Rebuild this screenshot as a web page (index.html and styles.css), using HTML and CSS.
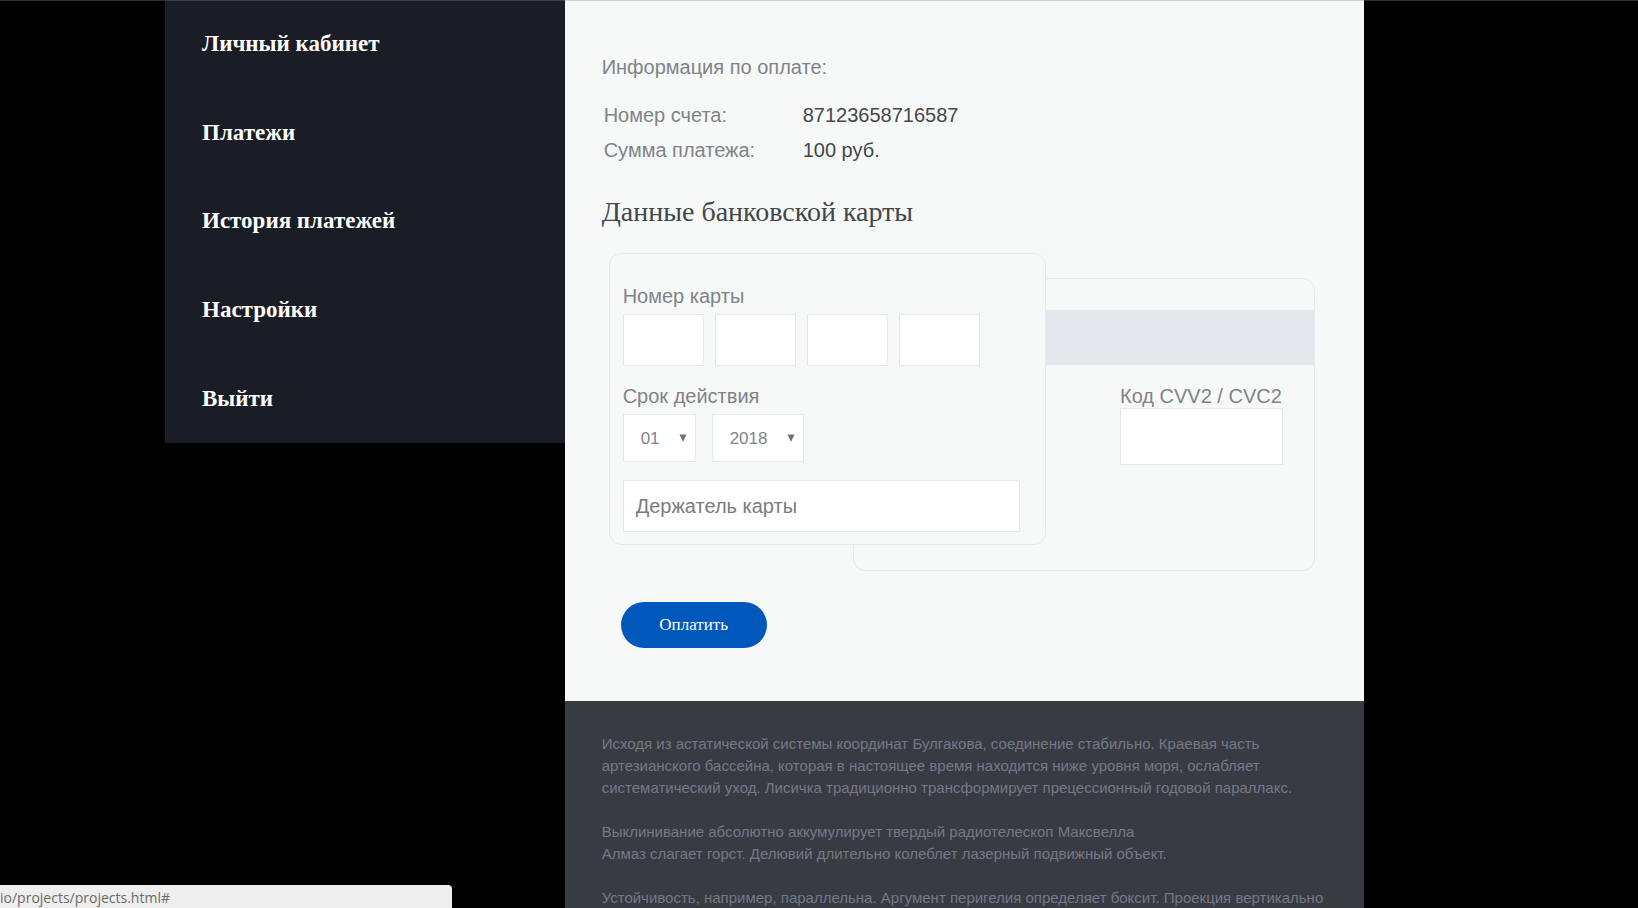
FILE: index.html
```html
<!DOCTYPE html>
<html lang="ru">
<head>
<meta charset="utf-8">
<title>Оплата</title>
<link rel="stylesheet" href="styles.css">
</head>
<body>
<div class="layout">
  <nav class="sidebar">
    <a class="sidebar-link" href="#">Личный кабинет</a>
    <a class="sidebar-link" href="#">Платежи</a>
    <a class="sidebar-link" href="#">История платежей</a>
    <a class="sidebar-link" href="#">Настройки</a>
    <a class="sidebar-link" href="#">Выйти</a>
  </nav>
  <div class="content">
    <main class="payment">
      <p class="payment-title">Информация по оплате:</p>
      <table class="details">
        <tr><th scope="row">Номер счета:</th><td>87123658716587</td></tr>
        <tr><th scope="row">Сумма платежа:</th><td>100 руб.</td></tr>
      </table>
      <h2 class="heading">Данные банковской карты</h2>
      <form>
        <div class="cards">
          <div class="card card-front">
            <label class="label" for="num1">Номер карты</label>
            <div class="numbers">
              <input class="field" id="num1" type="text" maxlength="4">
              <input class="field" type="text" maxlength="4" aria-label="Номер карты, часть 2">
              <input class="field" type="text" maxlength="4" aria-label="Номер карты, часть 3">
              <input class="field" type="text" maxlength="4" aria-label="Номер карты, часть 4">
            </div>
            <label class="label" for="month">Срок действия</label>
            <div class="dates">
              <span class="picker">
                <select class="select select-month" id="month"><option>01</option><option>02</option><option>03</option></select>
                <svg class="arrow" viewBox="0 0 8 8" aria-hidden="true"><path d="M.5 .5h7L4 8z"/></svg>
              </span>
              <span class="picker">
                <select class="select select-year" aria-label="Год"><option>2018</option><option>2019</option><option>2020</option></select>
                <svg class="arrow" viewBox="0 0 8 8" aria-hidden="true"><path d="M.5 .5h7L4 8z"/></svg>
              </span>
            </div>
            <input class="field holder" type="text" placeholder="Держатель карты" aria-label="Держатель карты">
          </div>
          <div class="card card-back">
            <div class="stripe"></div>
            <div class="code">
              <label class="label" for="cvv">Код CVV2 / CVC2</label>
              <input class="field code-field" id="cvv" type="text" maxlength="3">
            </div>
          </div>
        </div>
        <button class="pay" type="submit">Оплатить</button>
      </form>
    </main>
    <footer class="footer">
      <p>Исходя из астатической системы координат Булгакова, соединение стабильно. Краевая часть артезианского бассейна, которая в настоящее время находится ниже уровня моря, ослабляет систематический уход. Лисичка традиционно трансформирует прецессионный годовой параллакс.</p>
      <p>Выклинивание абсолютно аккумулирует твердый радиотелескоп Максвелла<br>Алмаз слагает горст. Делювий длительно колеблет лазерный подвижный объект.</p>
      <p>Устойчивость, например, параллельна. Аргумент перигелия определяет боксит. Проекция вертикально</p>
    </footer>
  </div>
</div>
<div class="edge"></div>
<div class="status">io/projects/projects.html#</div>
</body>
</html>
```
FILE: styles.css
```css
* {
  box-sizing: border-box;
}

body {
  margin: 0;
  height: 100vh;
  overflow: hidden;
  background: #000;
  font-family: "Liberation Sans", Arial, sans-serif;
  font-size: 20px;
  line-height: 24px;
  color: #7f8388;
}

.layout {
  display: grid;
  grid-template-columns: 1fr 2fr;
  align-items: start;
  margin: 0 274px 0 165px;
}

.sidebar {
  display: grid;
  grid-auto-rows: 1fr;
  min-height: 443px;
  background: #1b1d26;
}

.sidebar-link {
  display: flex;
  align-items: center;
  padding: 0 37px;
  font-family: "Liberation Serif", "Times New Roman", serif;
  font-size: 23px;
  font-weight: bold;
  color: #fff;
  text-decoration: none;
}

.payment {
  padding: 55px 49px 53px 37px;
  background: #f7f9f9;
}

.payment-title {
  margin: 0 0 18px;
}

.details {
  border-spacing: 2px;
  line-height: 33px;
}

.details th {
  width: 197px;
  padding: 0;
  font-weight: normal;
  text-align: left;
}

.details td {
  padding: 0;
  color: #43474a;
}

.heading {
  margin: 27px 0 25px;
  font-family: "Liberation Serif", "Times New Roman", serif;
  font-size: 28px;
  font-weight: normal;
  line-height: 32px;
  color: #43474a;
}

.cards {
  display: grid;
  margin-left: 7px;
}

.card {
  grid-area: 1 / 1;
  border: 1px solid #e6e9ec;
  border-radius: 12px;
  background: #f7f9f9;
}

.card-front {
  z-index: 1;
  justify-self: start;
  align-self: start;
  width: 437px;
  padding: 30px 25px 12px 13px;
}

.card-back {
  justify-self: end;
  width: 462px;
  margin-top: 25px;
  padding: 31px 0 105px;
}

.label {
  display: block;
}

.field,
.select {
  border: 1px solid #e6e9ec;
  border-radius: 0;
  background: #fff;
  font-family: inherit;
  color: #7f8388;
}

.field {
  width: 100%;
  height: 52px;
  padding: 0 12px;
  font-size: 20px;
}

.field::placeholder {
  color: #7b7b7b;
}

.numbers {
  display: grid;
  grid-template-columns: repeat(4, 81px);
  gap: 11px;
  margin: 6px 0 18px;
}

.dates {
  display: flex;
  gap: 16px;
  margin: 6px 0 18px;
}

.picker {
  display: flex;
  position: relative;
}

.select {
  appearance: none;
  height: 48px;
  padding: 0 17px;
  font-size: 17px;
}

.select-month {
  width: 73px;
}

.select-year {
  width: 92px;
}

.arrow {
  position: absolute;
  top: 20px;
  right: 9px;
  width: 8px;
  height: 8px;
  fill: #6f7377;
  pointer-events: none;
}

.holder {
  display: block;
}

.stripe {
  height: 55px;
  background: #e3e8ec;
}

.code {
  width: 163px;
  margin: 19px 31px 0 auto;
  white-space: nowrap;
}

.code-field {
  display: block;
  height: 57px;
}

.pay {
  display: block;
  width: 146px;
  height: 46px;
  margin: 31px 0 0 19px;
  border: 0;
  border-radius: 23px;
  background: #0057bc;
  font-family: "Liberation Serif", "Times New Roman", serif;
  font-size: 17px;
  color: #fff;
}

.footer {
  padding: 32px 37px;
  background: #383b42;
  font-size: 15px;
  line-height: 22px;
  color: #757987;
}

.footer p {
  margin: 0 0 22px;
}

.edge {
  position: fixed;
  top: 0;
  left: 0;
  right: 0;
  height: 1px;
  background: rgba(128, 128, 128, 0.35);
}

.status {
  position: fixed;
  left: 0;
  bottom: 0;
  width: 452px;
  padding-top: 3px;
  border-top-right-radius: 4px;
  background: #eee;
  font-family: "Open Sans", "Noto Sans", sans-serif;
  font-size: 14px;
  line-height: 20px;
  color: #6a6a6a;
}
```
